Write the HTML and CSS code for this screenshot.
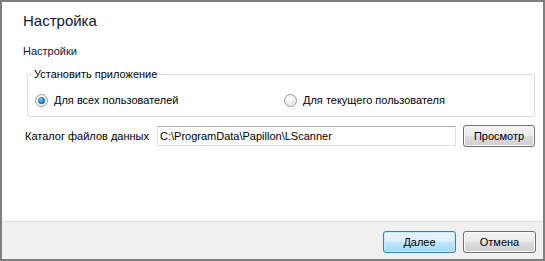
FILE: index.html
```html
<!DOCTYPE html>
<html lang="ru">
<head>
  <meta charset="UTF-8" />
  <title>Настройка</title>
  <link rel="stylesheet" href="styles.css">
</head>
<body>
  <div class="window">
    <div class="content">
      <h1 class="title">Настройка</h1>
      <div class="subtitle">Настройки</div>

      <fieldset class="group">
        <legend>Установить приложение</legend>
        <div class="options">
          <label class="option">
            <span class="radio checked"></span>
            Для всех пользователей
          </label>
          <label class="option">
            <span class="radio"></span>
            Для текущего пользователя
          </label>
        </div>
      </fieldset>

      <div class="path-row">
        <span class="path-label">Каталог файлов данных</span>
        <input class="path-input" type="text" value="C:\ProgramData\Papillon\LScanner" />
        <button class="btn browse">Просмотр</button>
      </div>
    </div>

    <div class="footer">
      <button class="btn default"><u>Д</u>алее</button>
      <button class="btn">Отмена</button>
    </div>
  </div>
</body>
</html>
```

FILE: styles.css
```css
* {
  box-sizing: border-box;
}

body {
  margin: 0;
  font-family: 'Liberation Sans', Arial, sans-serif;
  font-size: 11px;
  color: #000;
  background: #fff;
}

.window {
  width: 545px;
  height: 261px;
  border: 2px solid #7f7f7f;
  display: flex;
  flex-direction: column;
  background: #fff;
}

.content {
  flex: 1;
  padding: 9px 8px 0 21px;
}

.title {
  margin: 0;
  font-size: 15px;
  font-weight: normal;
  line-height: 19px;
  color: #0d1836;
}

.subtitle {
  margin-top: 14px;
  line-height: 14px;
  color: #0d1836;
}

.group {
  margin: 9px 0 0 4px;
  padding: 0 0 9px 7px;
  border: 1px solid #d5dce3;
  border-radius: 3px;
  min-width: 0;
}

.group legend {
  margin-left: -3px;
  padding: 0 2px;
  line-height: 14px;
}

.options {
  display: grid;
  grid-template-columns: 249px 1fr;
  padding-top: 12px;
}

.option {
  display: flex;
  align-items: center;
  gap: 6px;
  line-height: 14px;
  white-space: nowrap;
}

.radio {
  width: 13px;
  height: 13px;
  flex-shrink: 0;
  border-radius: 50%;
  border: 1px solid #9a9a9a;
  background: radial-gradient(circle at 40% 35%, #ffffff 0, #e6e6e6 60%, #cfcfcf 100%);
  box-shadow: inset 0 0 0 1px #f6f6f6;
  display: grid;
  place-items: center;
}

.radio.checked::after {
  content: "";
  width: 7px;
  height: 7px;
  border-radius: 50%;
  background: radial-gradient(circle at 40% 35%, #7fcaf5 0, #2a86cf 45%, #0c3f7d 100%);
}

.path-row {
  display: flex;
  align-items: center;
  margin: 8px 0 0 2px;
}

.path-label {
  flex: 0 0 132px;
  line-height: 14px;
  white-space: nowrap;
}

.path-input {
  flex: 0 0 299px;
  width: 299px;
  height: 20px;
  padding: 0 2px;
  font: inherit;
  color: #000;
  border: 1px solid #d9dee4;
  border-top-color: #abadb3;
  background: #fff;
}

.btn {
  width: 72px;
  height: 22px;
  padding: 0;
  flex-shrink: 0;
  font: inherit;
  color: #000;
  border: 1px solid #707070;
  border-radius: 3px;
  background: linear-gradient(#f2f2f2 0, #ebebeb 50%, #dddddd 51%, #cfcfcf 100%);
  box-shadow: inset 0 0 0 1px #fbfbfb;
}

.browse {
  margin-left: 7px;
}

.footer {
  height: 38px;
  border-top: 1px solid #dfdfdf;
  background: #f0f0f0;
  display: flex;
  justify-content: flex-end;
  align-items: flex-start;
  gap: 7px;
  padding: 9px 7px 0 0;
}

.footer .btn {
  width: 73px;
}

.btn.default {
  border-color: #3c7fb1;
  background: linear-gradient(#eaf6fd 0, #d9f0fc 50%, #bee6fd 51%, #a7d9f5 100%);
  box-shadow: inset 0 0 0 1px #c7e9fb;
}
```
